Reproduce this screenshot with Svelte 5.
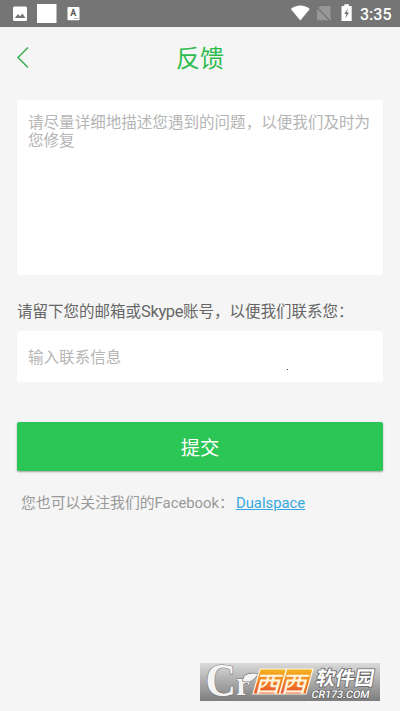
<script>
	let message = '';
	let contact = '';
</script>

<div class="screen">
	<div class="status">
		<svg class="status-left" width="90" height="27" viewBox="0 0 90 27">
			<rect x="13" y="6.5" width="14" height="14.5" rx="1.5" fill="#fff" />
			<path d="M14.8 18 L18 14 L20 16.3 L22.5 13.4 L25.4 18 Z" fill="#757575" />
			<rect x="37" y="4" width="19.5" height="19" fill="#fff" />
			<rect x="67.5" y="7" width="12" height="13.2" rx="1" fill="#fff" />
			<text x="73.3" y="16.2" text-anchor="middle" font-size="9" font-weight="700" fill="#555">A</text>
			<path d="M74 18.4h4.5" stroke="#999" stroke-width=".8" />
		</svg>
		<svg width="64" height="27" viewBox="0 0 64 27">
			<path d="M.8 9 C6 4.2 14.6 4.2 19.8 9 L10.3 20.6 Z" fill="#fff" />
			<path d="M31 6h9.5v14.2H27V10z" fill="#979797" />
			<path d="M27.2 7 L40.5 20.5" stroke="#747474" stroke-width="2.4" />
			<path d="M28 6.6 L41 20" stroke="#aaa" stroke-width="1" />
			<path d="M51.5 6h2.8V4.2h4.6V6h2.8v15H51.5z" fill="#fff" />
			<path d="M58 8.2 L54.3 14 H56.4 L55.4 18.6 L59 12.6 H56.9 Z" fill="#747474" />
		</svg>
		<span class="time">3:35</span>
	</div>

	<header class="header">
		<svg class="back" width="14" height="24" viewBox="0 0 14 24">
			<path d="M12 1.5 L2 11.5 L12 21.5" fill="none" stroke="#37b052" stroke-width="1.5" />
		</svg>
		<h1>反馈</h1>
	</header>

	<main>
		<textarea class="message" bind:value={message} placeholder="请尽量详细地描述您遇到的问题，以便我们及时为您修复"></textarea>
		<label class="label" for="contact">请留下您的邮箱或<span class="skype">Skype</span>账号，以便我们联系您：</label>
		<div class="contact">
			<input id="contact" bind:value={contact} placeholder="输入联系信息">
			<span class="dot"></span>
		</div>
		<button class="submit">提交</button>
		<p class="follow">您也可以关注我们的Facebook：<a href="#facebook">Dualspace</a></p>
	</main>

	<svg class="watermark" width="180" height="60" viewBox="0 -8 180 60">
		<defs>
			<linearGradient id="plate" x1="0" y1="0" x2="0" y2="1">
				<stop offset="0" stop-color="#dadada" />
				<stop offset=".5" stop-color="#ababab" />
				<stop offset="1" stop-color="#7d7d7d" />
			</linearGradient>
			<linearGradient id="orange" x1="0" y1="0" x2="0" y2="1">
				<stop offset="0" stop-color="#f6b51d" />
				<stop offset="1" stop-color="#e8522a" />
			</linearGradient>
		</defs>
		<rect y="4" width="180" height="38" fill="url(#plate)" />
		<text class="cr" transform="translate(5.5 37) scale(.92 1)" font-size="46">C<tspan font-size="34" dy="-1">r</tspan></text>
		<path class="leaf" d="M43 22 C43 16 48 13 58 15 C54 21 49 24 43 22z" />
		<path class="tile" d="M60 10h53l-7 25H53z" />
		<g class="xixi">
			<text transform="translate(54.5 32.5) skewX(-15) scale(1.15 1)" font-size="22">西</text>
			<text transform="translate(81 32.5) skewX(-15) scale(1.15 1)" font-size="22">西</text>
		</g>
		<path d="M86.5 10l-7 25" stroke="#fff5df" stroke-width="1.6" />
		<g class="site">
			<text transform="translate(115 26) skewX(-10)" font-size="19.5" textLength="58" lengthAdjust="spacingAndGlyphs">软件园</text>
			<text class="domain" transform="translate(111 38.5) skewX(-10)" font-size="10.5" textLength="58" lengthAdjust="spacingAndGlyphs">CR173.COM</text>
		</g>
	</svg>
</div>

<style>
	:global(body) {
		background: #f5f5f5;
	}

	.screen {
		position: relative;
		width: 400px;
		height: 711px;
		overflow: hidden;
		background: #f5f5f5;
		font-family: Roboto, "Noto Sans CJK SC", sans-serif;
	}

	.status {
		display: flex;
		align-items: center;
		height: 27px;
		background: #757575;
	}

	.status-left {
		margin-right: 200px;
	}

	.time {
		margin-left: 6px;
		padding-top: 1px;
		color: #fff;
		font-size: 16px;
		font-weight: 500;
	}

	.header {
		display: flex;
		align-items: center;
		height: 61px;
		padding: 0 16px;
	}

	.back {
		width: 14px;
	}

	h1 {
		flex: 1;
		margin: 2px 14px 0 0;
		color: #2dbb4e;
		font-size: 24px;
		font-weight: 400;
		line-height: 36px;
		text-align: center;
	}

	main {
		display: flex;
		flex-direction: column;
		padding: 12px 17px 0;
	}

	.message {
		box-sizing: border-box;
		height: 175px;
		padding: 14px 11px;
		border: 0;
		border-radius: 3px;
		outline: 0;
		resize: none;
		overflow: hidden;
		background: #fff;
		font: 15.55px/18px Roboto, "Noto Sans CJK SC", sans-serif;
	}

	::placeholder {
		color: #b5b5b5;
		opacity: 1;
	}

	.label {
		margin-top: 25px;
		color: #666;
		font-size: 15.5px;
		line-height: 24px;
		white-space: nowrap;
	}

	.skype {
		font-size: 16.5px;
		letter-spacing: -.4px;
	}

	.contact {
		position: relative;
		display: flex;
		height: 51px;
		margin-top: 7px;
		border-radius: 3px;
		background: #fff;
	}

	input {
		flex: 1;
		padding: 2px 11px 0;
		border: 0;
		outline: 0;
		background: none;
		font: 15.55px Roboto, "Noto Sans CJK SC", sans-serif;
	}

	.dot {
		position: absolute;
		left: 270px;
		top: 38px;
		width: 1px;
		height: 1px;
		background: #444;
	}

	.submit {
		height: 49px;
		margin-top: 40px;
		border: 0;
		border-radius: 2px;
		background: #2bc655;
		box-shadow: 0 1px 2px rgba(0, 0, 0, .35);
		color: #fff;
		font: 19.3px Roboto, "Noto Sans CJK SC", sans-serif;
	}

	.follow {
		margin: 20px 0 0 4px;
		color: #999;
		font-size: 14.85px;
		line-height: 24px;
		white-space: nowrap;
	}

	.follow a {
		margin-left: 2px;
		color: #35a9e0;
	}

	/* site badge over the bottom right corner */
	.watermark {
		position: absolute;
		left: 200px;
		top: 651px;
	}

	.cr,
	.leaf {
		fill: #f4f4f4;
		stroke: #777;
		stroke-width: 1.2;
		paint-order: stroke;
		font-family: "Liberation Serif", serif;
		font-weight: 700;
	}

	.tile {
		fill: url(#orange);
		stroke: #fff5df;
		stroke-width: 1.2;
	}

	.xixi {
		fill: #fff5df;
		font-family: "Noto Sans CJK SC", sans-serif;
		font-weight: 500;
	}

	.site {
		fill: #fff;
		stroke: #666;
		stroke-width: 1.6;
		paint-order: stroke;
		font-family: Roboto, "Noto Sans CJK SC", sans-serif;
		font-weight: 700;
	}

	.domain {
		font-weight: 500;
	}
</style>
